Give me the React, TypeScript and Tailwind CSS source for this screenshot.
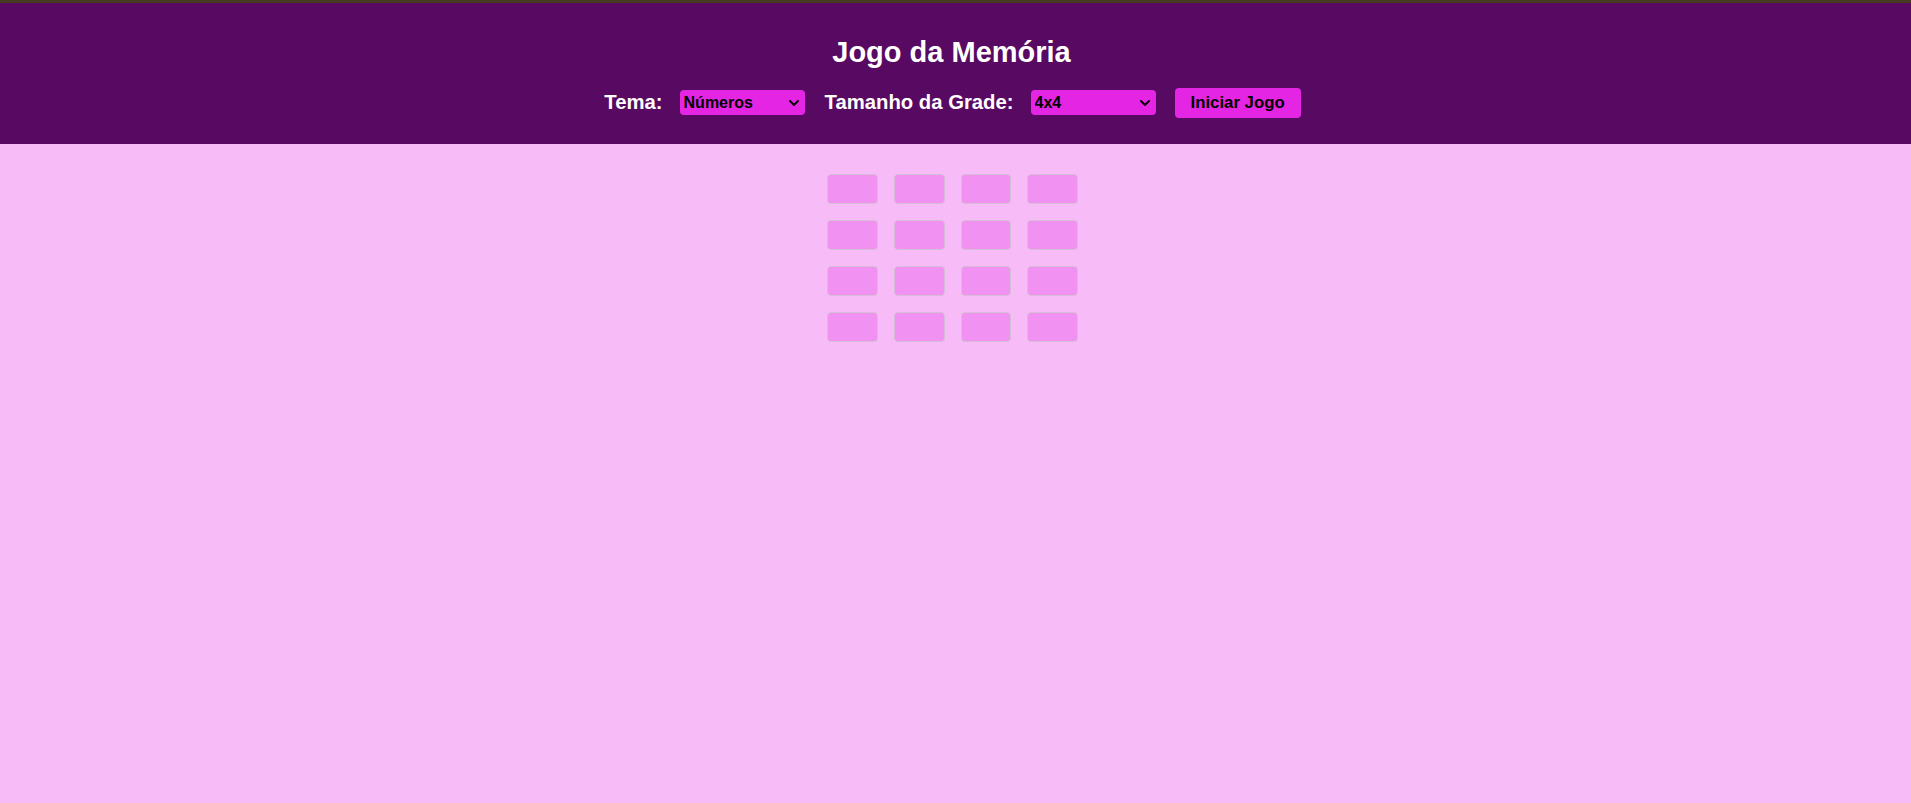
import React, { useState } from "react";

function Chevron() {
  return (
    <svg
      className="pointer-events-none absolute right-[6px] top-1/2 -translate-y-1/2"
      width="10"
      height="6"
      viewBox="0 0 10 6"
      fill="none"
    >
      <path d="M1 1 L5 5 L9 1" stroke="#000" strokeWidth="1.8" strokeLinecap="round" strokeLinejoin="round" />
    </svg>
  );
}

function Select({ value, options, onChange }: { value: string; options: string[]; onChange: (v: string) => void }) {
  return (
    <div className="relative w-[125px] h-[25px]">
      <select
        value={value}
        onChange={(e) => onChange(e.target.value)}
        className="appearance-none w-full h-full bg-[#e426e4] text-black font-bold text-[16px] leading-[25px] pl-[4px] pr-[20px] rounded-[4px] outline-none"
      >
        {options.map((o) => (
          <option key={o} value={o}>
            {o}
          </option>
        ))}
      </select>
      <Chevron />
    </div>
  );
}

export default function App() {
  const [tema, setTema] = useState("Números");
  const [size, setSize] = useState("4x4");
  const cards = Array.from({ length: 16 }, (_, i) => i);

  return (
    <div className="min-h-[803px] bg-[#f7bcf7] font-['Liberation_Sans',Arial,sans-serif]">
      <header className="border-t-[3px] border-[#463a22] bg-[#580a62] pt-[33px] pb-[27px] flex flex-col items-center">
        <h1 className="text-white font-bold text-[29px] leading-[33px] mb-[19px] translate-x-[-4px]">Jogo da Memória</h1>
        <div className="flex items-center h-[29px] translate-x-[-3px]">
          <span className="text-white font-bold text-[20.3px] mr-[17px]">Tema:</span>
          <Select value={tema} options={["Números", "Letras", "Cores"]} onChange={setTema} />
          <span className="text-white font-bold text-[20.3px] ml-[20px] mr-[17px]">Tamanho da Grade:</span>
          <Select value={size} options={["4x4", "6x6"]} onChange={setSize} />
          <button className="ml-[19px] h-[30px] px-[16px] bg-[#e426e4] text-black font-bold text-[16.8px] rounded-[4px]">
            Iniciar Jogo
          </button>
        </div>
      </header>
      <main className="pt-[30px] flex justify-center">
        <div className="grid grid-cols-[repeat(4,50.7px)] gap-[16px] translate-x-[-3px]">
          {cards.map((c) => (
            <div key={c} className="h-[30px] bg-[#f191f1] border border-[#d5bdd5] rounded-[4px]" />
          ))}
        </div>
      </main>
    </div>
  );
}
